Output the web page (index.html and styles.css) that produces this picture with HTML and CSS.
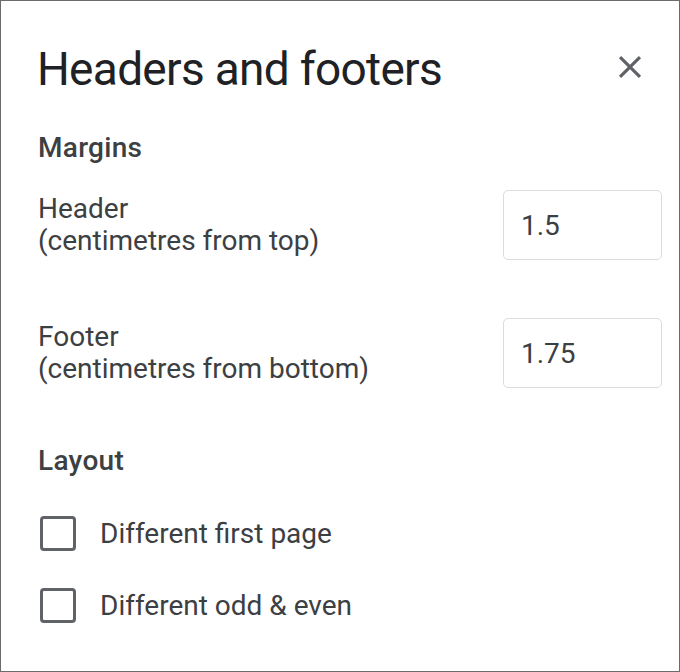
FILE: index.html
```html
<!DOCTYPE html>
<html lang="en">
<head>
    <meta charset="UTF-8">
    <meta name="viewport" content="width=device-width, initial-scale=1.0">
    <title>Headers and footers</title>
    <link rel="stylesheet" href="styles.css">
</head>
<body>
    <div class="dialog">
        <div class="head">
            <h1>Headers and footers</h1>
            <button class="close" aria-label="Close">
                <svg viewBox="0 0 24 24" width="38" height="38"><path d="M19 6.41L17.59 5 12 10.59 6.41 5 5 6.41 10.59 12 5 17.59 6.41 19 12 13.41 17.59 19 19 17.59 13.41 12z"/></svg>
            </button>
        </div>

        <h2 class="margins-title">Margins</h2>
        <div class="field">
            <span class="label">Header<br>(centimetres from top)</span>
            <input type="text" value="1.5">
        </div>
        <div class="field footer-field">
            <span class="label">Footer<br>(centimetres from bottom)</span>
            <input type="text" value="1.75">
        </div>

        <h2 class="layout-title">Layout</h2>
        <label class="check">
            <span class="box"></span> Different first page
        </label>
        <label class="check">
            <span class="box"></span> Different odd &amp; even
        </label>
    </div>
</body>
</html>
```

FILE: styles.css
```css
* {
    box-sizing: border-box;
}
body {
    margin: 0;
    font-family: Roboto, "Liberation Sans", sans-serif;
    background: #ffffff;
}
.dialog {
    width: 680px;
    height: 672px;
    border: 1px solid #6b6b6b;
    padding: 41px 30px 0 37px;
    background: #ffffff;
}
.head {
    display: flex;
    justify-content: space-between;
    align-items: center;
}
h1 {
    margin: 0 0 0 -1px;
    font-size: 46px;
    line-height: 54px;
    font-weight: 400;
    letter-spacing: -0.7px;
    color: #202124;
}
.close {
    border: none;
    background: none;
    padding: 0;
    width: 38px;
    height: 38px;
    fill: #5f6368;
    cursor: pointer;
    margin-top: -4px;
}
.close svg {
    display: block;
}
h2 {
    margin: 0;
    font-size: 28px;
    line-height: 32px;
    font-weight: 500;
    letter-spacing: 0.3px;
    color: #3c4043;
}
.margins-title {
    margin-top: 36px;
}
.field {
    display: flex;
    justify-content: space-between;
    align-items: center;
    margin-top: 26px;
    margin-right: -13px;
}
.footer-field {
    margin-top: 58px;
}
.label {
    font-size: 28px;
    line-height: 32px;
    color: #3c4043;
}
input {
    width: 159px;
    height: 70px;
    border: 1px solid #dadce0;
    border-radius: 5px;
    padding: 0 17px;
    font-family: inherit;
    font-size: 28px;
    color: #3c4043;
    outline: none;
}
.layout-title {
    margin-top: 57px;
}
.check {
    display: flex;
    align-items: center;
    gap: 24px;
    margin-top: 39px;
    font-size: 28px;
    line-height: 32px;
    color: #3c4043;
}
.check + .check {
    margin-top: 37px;
}
.box {
    width: 36px;
    height: 35px;
    border: 3px solid #5f6368;
    border-radius: 4px;
    margin-left: 2px;
}
```
